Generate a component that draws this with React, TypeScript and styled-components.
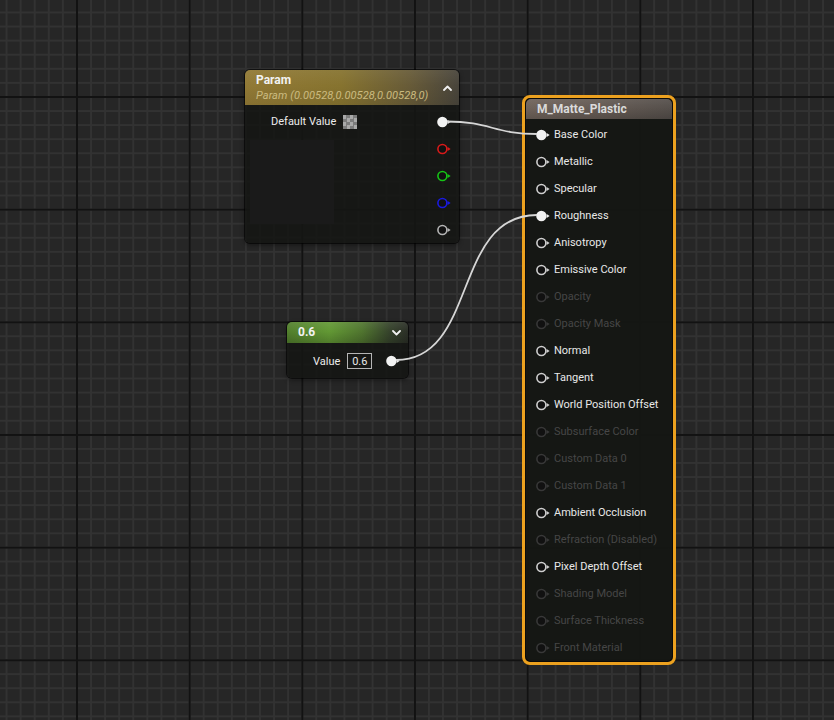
import React from 'react';
import styled, { createGlobalStyle } from 'styled-components';

const GlobalStyle = createGlobalStyle`
  html, body { margin: 0; padding: 0; background: #262626; }
  body { font-family: Roboto, "Liberation Sans", sans-serif; }
  * { box-sizing: border-box; }
`;

const MAJOR = 112.667;
const MINOR = MAJOR / 8;

const Canvas = styled.div`
  position: relative;
  width: 834px;
  height: 720px;
  overflow: hidden;
  background-color: #262626;
  background-image:
    linear-gradient(to right, #121212 2px, transparent 2px),
    linear-gradient(to bottom, #121212 2px, transparent 2px),
    linear-gradient(to right, #323232 2px, transparent 2px),
    linear-gradient(to bottom, #323232 2px, transparent 2px);
  background-size: ${MAJOR}px ${MAJOR}px, ${MAJOR}px ${MAJOR}px, ${MINOR}px ${MINOR}px, ${MINOR}px ${MINOR}px;
  background-position: 76px 96px;
`;

const Node = styled.div<{ $x: number; $y: number; $w: number }>`
  position: absolute;
  left: ${(p) => p.$x}px;
  top: ${(p) => p.$y}px;
  width: ${(p) => p.$w}px;
  border-radius: 5px;
  background: rgba(20, 22, 19, 0.88);
  box-shadow: 0 0 0 1px rgba(0, 0, 0, 0.6), 0 2px 5px rgba(0, 0, 0, 0.45);
  overflow: hidden;
  color: #e8e8e8;
  z-index: 1;
`;

const ParamHeader = styled.div`
  display: flex;
  align-items: center;
  justify-content: space-between;
  height: 35px;
  padding: 3px 7px 2px 11px;
  background:
    linear-gradient(180deg, rgba(255, 255, 255, 0.06) 0%, rgba(0, 0, 0, 0) 45%, rgba(0, 0, 0, 0.08) 100%),
    linear-gradient(90deg, #917935 0%, #86732f 45%, #665a38 78%, #48443b 100%);
`;

const HeaderText = styled.div`
  display: flex;
  flex-direction: column;
`;

const Title = styled.div<{ $color?: string }>`
  font-size: 12px;
  font-weight: 700;
  line-height: 15px;
  color: ${(p) => p.$color || '#f2f2f2'};
  white-space: nowrap;
`;

const Subtitle = styled.div`
  font-size: 11px;
  font-style: italic;
  line-height: 15px;
  color: #cbbb80;
  white-space: nowrap;
  letter-spacing: 0.08px;
`;

const ParamBody = styled.div`
  display: flex;
  justify-content: space-between;
  padding: 3px 8.5px 0 0;
`;

const LeftCol = styled.div`
  display: flex;
  flex-direction: column;
`;

const PropRow = styled.div`
  height: 27px;
  display: flex;
  align-items: center;
  gap: 7px;
  padding-left: 26px;
  font-size: 11px;
  color: #ececec;
`;

const Checker = styled.div`
  width: 14px;
  height: 14px;
  background-color: #a9a9a9;
  background-image: conic-gradient(#7c7c7c 25%, transparent 0 50%, #7c7c7c 0 75%, transparent 0);
  background-size: 7px 7px;
`;

const Preview = styled.div`
  margin: 5px 0 0 5px;
  width: 84px;
  height: 84px;
  background: #1a1a1a;
`;

const PinCol = styled.div`
  display: flex;
  flex-direction: column;
`;

const PinRow = styled.div`
  height: 27px;
  display: flex;
  align-items: center;
  justify-content: flex-end;
`;

const ConstHeader = styled.div`
  display: flex;
  align-items: center;
  justify-content: space-between;
  height: 21px;
  padding: 0 7px 0 11px;
  background:
    linear-gradient(180deg, rgba(255, 255, 255, 0.08) 0%, rgba(0, 0, 0, 0) 45%, rgba(0, 0, 0, 0.18) 100%),
    linear-gradient(90deg, #527f2d 0%, #629834 35%, #50752f 62%, #35422b 85%, #2b2f27 100%);
`;

const ConstBody = styled.div`
  height: 35px;
  display: flex;
  align-items: center;
  padding: 1px 8px 0 26px;
  font-size: 11px;
`;

const Label = styled.span`
  margin-right: 7px;
  color: #ececec;
`;

const ValueBox = styled.div`
  width: 25px;
  height: 16px;
  border: 1px solid #b5b5b5;
  display: flex;
  align-items: center;
  justify-content: center;
  font-size: 11px;
  color: #e8e8e8;
`;

const Spacer = styled.div`
  flex: 1;
`;

const SelectionFrame = styled.div<{ $x: number; $y: number }>`
  position: absolute;
  left: ${(p) => p.$x}px;
  top: ${(p) => p.$y}px;
  width: 154px;
  height: 570px;
  border: 3px solid #eca11f;
  border-radius: 8px;
  padding: 1px;
  background: rgba(8, 8, 8, 0.9);
  z-index: 1;
`;

const MaterialNode = styled.div`
  height: 100%;
  border-radius: 5px;
  overflow: hidden;
  background: rgba(22, 24, 21, 0.9);
`;

const MatHeader = styled.div`
  height: 20px;
  display: flex;
  align-items: center;
  padding-left: 11px;
  background:
    linear-gradient(180deg, rgba(255, 255, 255, 0.07) 0%, rgba(0, 0, 0, 0) 50%, rgba(0, 0, 0, 0.15) 100%),
    linear-gradient(90deg, #6e625a 0%, #645a53 50%, #544e4a 100%);
`;

const MatRows = styled.div`
  padding-top: 2px;
`;

const MatRow = styled.div<{ $dim: boolean }>`
  height: 27px;
  display: flex;
  align-items: center;
  gap: 4px;
  padding-left: 10px;
  font-size: 11px;
  white-space: nowrap;
  color: ${(p) => (p.$dim ? '#464646' : '#e8e8e8')};
`;

const Wires = styled.svg`
  position: absolute;
  left: 0;
  top: 0;
  pointer-events: none;
  z-index: 2;
`;

const PinSvg = styled.svg`
  display: block;
  flex: none;
`;

function Pin({ color, filled }: { color: string; filled?: boolean }) {
  return (
    <PinSvg width="14" height="12" viewBox="0 0 14 12">
      <circle cx="5.4" cy="6" r={filled ? 5.2 : 4.5} fill={filled ? color : '#111'} stroke={filled ? 'none' : color} strokeWidth="1.6" />
      <path d="M10.6 4.1 L13.6 6 L10.6 7.9 Z" fill={color} />
    </PinSvg>
  );
}

function Chevron({ up }: { up?: boolean }) {
  return (
    <svg width="9" height="6" viewBox="0 0 9 6">
      <polyline
        points={up ? '1,5 4.5,1.5 8,5' : '1,1 4.5,4.5 8,1'}
        fill="none"
        stroke="#f0f0f0"
        strokeWidth="1.8"
        strokeLinecap="round"
        strokeLinejoin="round"
      />
    </svg>
  );
}

const materialInputs: { label: string; state: 'filled' | 'open' | 'dim' }[] = [
  { label: 'Base Color', state: 'filled' },
  { label: 'Metallic', state: 'open' },
  { label: 'Specular', state: 'open' },
  { label: 'Roughness', state: 'filled' },
  { label: 'Anisotropy', state: 'open' },
  { label: 'Emissive Color', state: 'open' },
  { label: 'Opacity', state: 'dim' },
  { label: 'Opacity Mask', state: 'dim' },
  { label: 'Normal', state: 'open' },
  { label: 'Tangent', state: 'open' },
  { label: 'World Position Offset', state: 'open' },
  { label: 'Subsurface Color', state: 'dim' },
  { label: 'Custom Data 0', state: 'dim' },
  { label: 'Custom Data 1', state: 'dim' },
  { label: 'Ambient Occlusion', state: 'open' },
  { label: 'Refraction (Disabled)', state: 'dim' },
  { label: 'Pixel Depth Offset', state: 'open' },
  { label: 'Shading Model', state: 'dim' },
  { label: 'Surface Thickness', state: 'dim' },
  { label: 'Front Material', state: 'dim' },
];

const paramPins = [
  { color: '#f2f2f2', filled: true },
  { color: '#d81a1a' },
  { color: '#16c416' },
  { color: '#1a1ae0' },
  { color: '#b4b4b4' },
];

export default function App() {
  return (
    <>
      <GlobalStyle />
      <Canvas>
        <Node $x={245} $y={70} $w={214}>
          <ParamHeader>
            <HeaderText>
              <Title>Param</Title>
              <Subtitle>Param (0.00528,0.00528,0.00528,0)</Subtitle>
            </HeaderText>
            <Chevron up />
          </ParamHeader>
          <ParamBody>
            <LeftCol>
              <PropRow>
                <span>Default Value</span>
                <Checker />
              </PropRow>
              <Preview />
            </LeftCol>
            <PinCol>
              {paramPins.map((p, i) => (
                <PinRow key={i}>
                  <Pin color={p.color} filled={p.filled} />
                </PinRow>
              ))}
            </PinCol>
          </ParamBody>
        </Node>

        <Node $x={287} $y={322} $w={121}>
          <ConstHeader>
            <Title>0.6</Title>
            <Chevron />
          </ConstHeader>
          <ConstBody>
            <Label>Value</Label>
            <ValueBox>0.6</ValueBox>
            <Spacer />
            <Pin color="#f2f2f2" filled />
          </ConstBody>
        </Node>

        <SelectionFrame $x={522} $y={95}>
          <MaterialNode>
            <MatHeader>
              <Title $color="#dadada">M_Matte_Plastic</Title>
            </MatHeader>
            <MatRows>
              {materialInputs.map((m) => (
                <MatRow key={m.label} $dim={m.state === 'dim'}>
                  <Pin color={m.state === 'dim' ? '#383838' : m.state === 'filled' ? '#f2f2f2' : '#cfcfcf'} filled={m.state === 'filled'} />
                  <span>{m.label}</span>
                </MatRow>
              ))}
            </MatRows>
          </MaterialNode>
        </SelectionFrame>

        <Wires width="834" height="720" viewBox="0 0 834 720">
          <path d="M447 121.5 C490 121.5, 494 134, 537 134" fill="none" stroke="#d6d6d6" strokeWidth="1.8" />
          <path d="M396 360 C478 360, 452 215, 537 215" fill="none" stroke="#d6d6d6" strokeWidth="1.8" />
        </Wires>
      </Canvas>
    </>
  );
}
